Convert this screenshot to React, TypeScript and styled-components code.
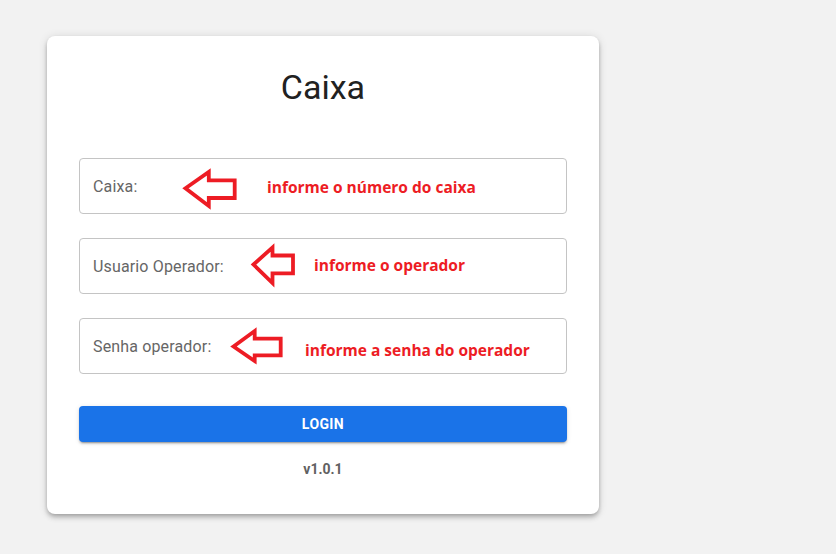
import React from "react";
import styled, { createGlobalStyle } from "styled-components";

const Global = createGlobalStyle`
  html, body { margin: 0; padding: 0; background: #f2f2f2; }
  body { font-family: Roboto, "Liberation Sans", sans-serif; }
`;

const Page = styled.div`
  width: 836px;
  height: 554px;
  box-sizing: border-box;
  padding: 36px 0 0 47px;
  background: #f2f2f2;
`;

const Card = styled.div`
  width: 552px;
  box-sizing: border-box;
  padding: 30px 32px 35px;
  background: #fff;
  border-radius: 8px;
  box-shadow: 0 2px 4px -1px rgba(0,0,0,0.2), 0 4px 5px 0 rgba(0,0,0,0.14), 0 1px 10px 0 rgba(0,0,0,0.12);
  display: flex;
  flex-direction: column;
`;

const Title = styled.h1`
  margin: 0 0 50px;
  font-family: Roboto, sans-serif;
  font-weight: 400;
  font-size: 34px;
  line-height: 42px;
  color: #212121;
  text-align: center;
`;

const Fields = styled.div`
  display: flex;
  flex-direction: column;
  gap: 24px;
`;

const Field = styled.div`
  position: relative;
  height: 56px;
  box-sizing: border-box;
  border: 1px solid #c4c4c4;
  border-radius: 4px;
  display: flex;
  align-items: center;
  padding: 0 13px;
`;

const Label = styled.span`
  font-family: Roboto, sans-serif;
  font-size: 16px;
  letter-spacing: 0.15px;
  color: #666;
`;

const ArrowLayer = styled.svg`
  position: absolute;
  left: 0;
  top: 0;
  width: 100%;
  height: 100%;
  overflow: visible;
  pointer-events: none;
`;

const NoteText = styled.span<{ $x: number; $y: number }>`
  position: absolute;
  left: ${(p) => p.$x}px;
  top: ${(p) => p.$y}px;
  white-space: nowrap;
  font-family: "Open Sans", sans-serif;
  font-weight: 700;
  font-size: 15.5px;
  line-height: 20px;
  color: #ed1c24;
`;

const LoginButton = styled.button`
  margin-top: 32px;
  height: 36px;
  border: none;
  border-radius: 4px;
  background: #1a73e8;
  color: #fff;
  font-family: Roboto, sans-serif;
  font-weight: 700;
  font-size: 14px;
  letter-spacing: 0.4px;
  box-shadow: 0 3px 1px -2px rgba(0,0,0,0.2), 0 2px 2px 0 rgba(0,0,0,0.14), 0 1px 5px 0 rgba(0,0,0,0.12);
`;

const Version = styled.div`
  margin-top: 17px;
  text-align: center;
  font-family: Roboto, sans-serif;
  font-weight: 700;
  font-size: 14px;
  line-height: 20px;
  color: #616161;
`;

type ArrowSpec = {
  tipX: number;
  tipY: number;
  headX: number;
  headTop: number;
  headBot: number;
  shaftTop: number;
  shaftBot: number;
  right: number;
};

const Arrow = ({ a }: { a: ArrowSpec }) => {
  const pts = [
    [a.tipX, a.tipY],
    [a.headX, a.headTop],
    [a.headX, a.shaftTop],
    [a.right, a.shaftTop],
    [a.right, a.shaftBot],
    [a.headX, a.shaftBot],
    [a.headX, a.headBot],
  ]
    .map((p) => p.join(","))
    .join(" ");
  return (
    <ArrowLayer>
      <polygon
        points={pts}
        fill="none"
        stroke="#ed1c24"
        strokeWidth="3.8"
        strokeLinejoin="miter"
      />
    </ArrowLayer>
  );
};

const fields: {
  label: string;
  note: string;
  textX: number;
  textY: number;
  arrow: ArrowSpec;
}[] = [
  {
    label: "Caixa:",
    note: "informe o número do caixa",
    textX: 187,
    textY: 18,
    arrow: { tipX: 105.5, tipY: 29.3, headX: 128.8, headTop: 13, headBot: 47, shaftTop: 21.3, shaftBot: 39, right: 154.7 },
  },
  {
    label: "Usuario Operador:",
    note: "informe o operador",
    textX: 234,
    textY: 16,
    arrow: { tipX: 173.5, tipY: 25.5, headX: 192.5, headTop: 8.5, headBot: 44, shaftTop: 16.5, shaftBot: 34.3, right: 213 },
  },
  {
    label: "Senha operador:",
    note: "informe a senha do operador",
    textX: 225,
    textY: 21,
    arrow: { tipX: 153.5, tipY: 27.5, headX: 174.7, headTop: 12, headBot: 42, shaftTop: 19.7, shaftBot: 36.3, right: 200.7 },
  },
];

export default function App() {
  return (
    <>
      <Global />
      <Page>
        <Card>
          <Title>Caixa</Title>
          <Fields>
            {fields.map((f) => (
              <Field key={f.label}>
                <Label>{f.label}</Label>
                <Arrow a={f.arrow} />
                <NoteText $x={f.textX} $y={f.textY}>{f.note}</NoteText>
              </Field>
            ))}
          </Fields>
          <LoginButton>LOGIN</LoginButton>
          <Version>v1.0.1</Version>
        </Card>
      </Page>
    </>
  );
}
